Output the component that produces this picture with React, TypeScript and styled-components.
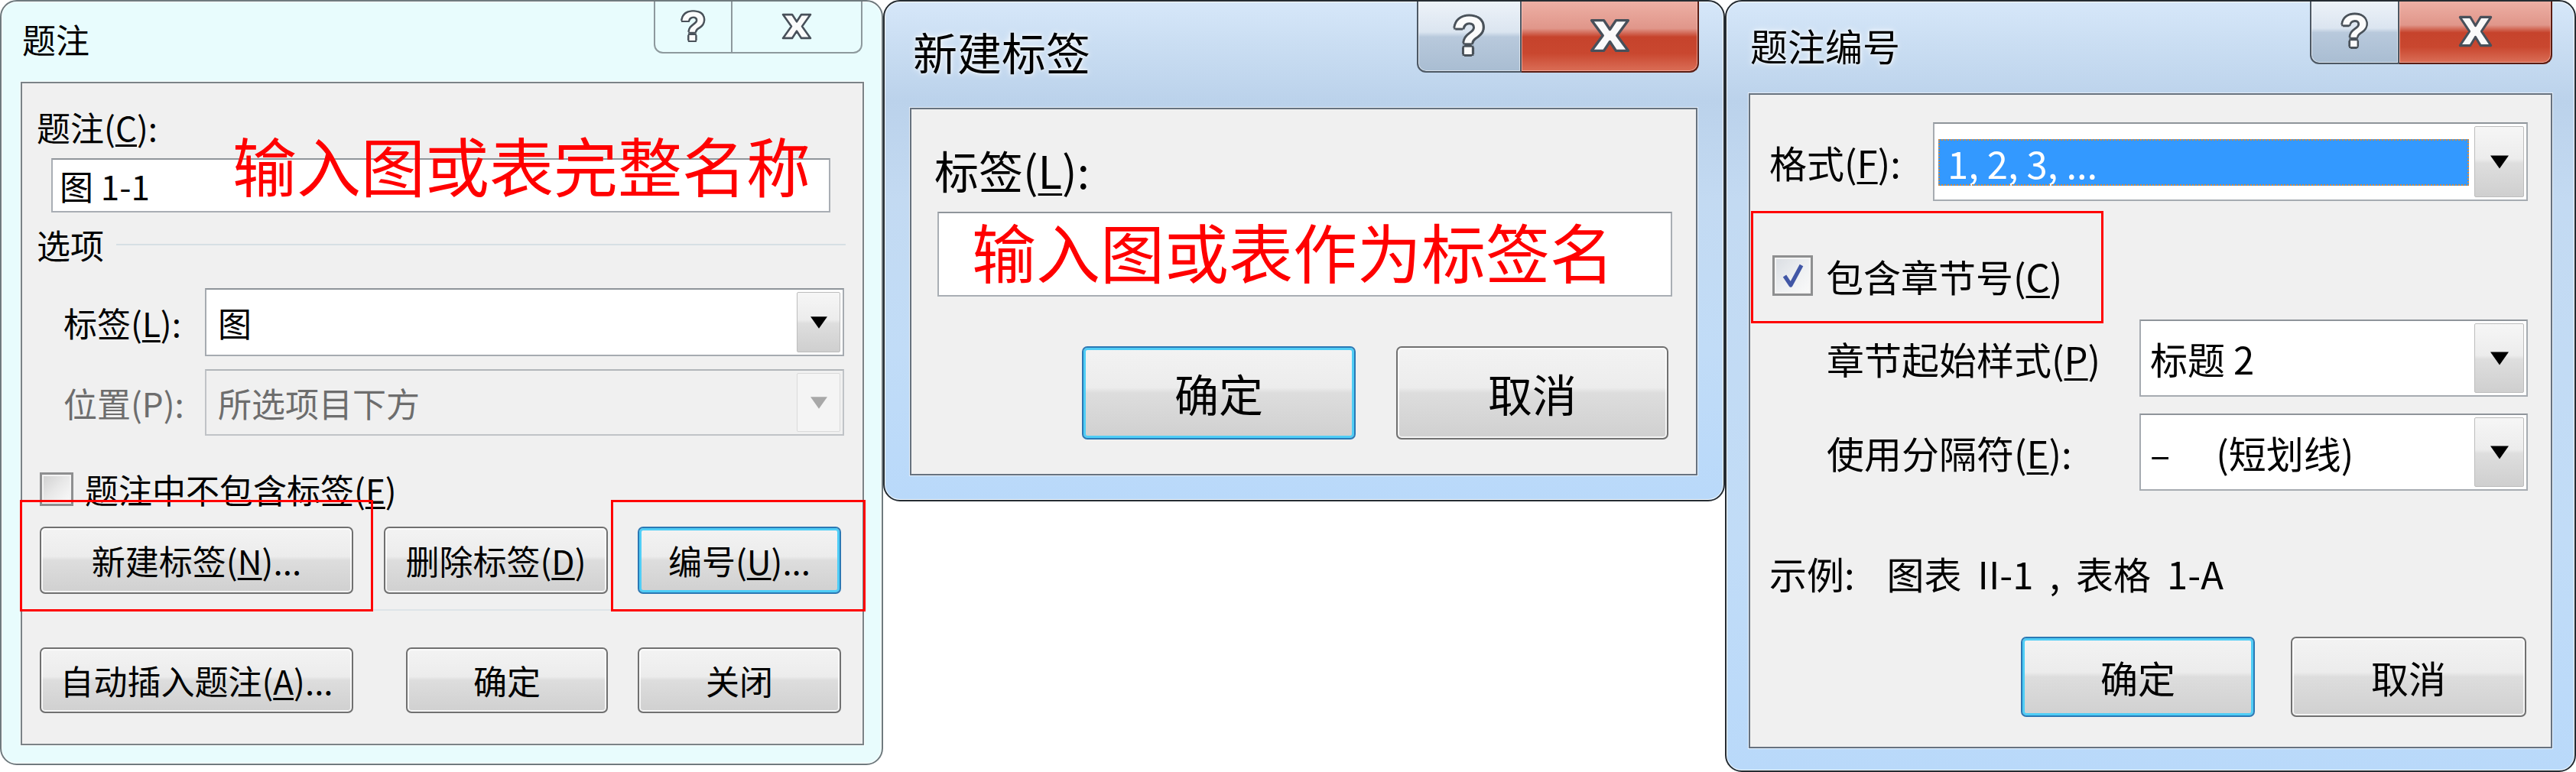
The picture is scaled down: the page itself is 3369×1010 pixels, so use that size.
import React from "react";
import styled, { createGlobalStyle, css } from "styled-components";

const UI_FONT = `"Noto Sans CJK SC", "Noto Sans", "Liberation Sans", sans-serif`;

const GlobalStyle = createGlobalStyle`
  html, body { margin: 0; padding: 0; background: #ffffff; }
  body { font-family: ${UI_FONT}; }
  #root { width: 3369px; height: 1010px; }
`;

type Skin = "basic" | "aero";

const Desktop = styled.div`
  display: flex;
  align-items: flex-start;
  width: 3369px;
  height: 1010px;
  overflow: hidden;
  background: #ffffff;
`;

const Window = styled.div<{ $w: number; $h: number; $skin: Skin; $fs: number }>`
  position: relative;
  flex: 0 0 auto;
  box-sizing: border-box;
  width: ${(p) => p.$w}px;
  height: ${(p) => p.$h}px;
  display: flex;
  flex-direction: column;
  border: 2px solid ${(p) => (p.$skin === "basic" ? "#6f7a7e" : "#252c32")};
  border-radius: 22px;
  overflow: hidden;
  font-family: ${UI_FONT};
  font-size: ${(p) => p.$fs}px;
  line-height: 1;
  color: #000;
  background: ${(p) =>
    p.$skin === "basic"
      ? "#e8fcfd"
      : "linear-gradient(180deg, #d6e7f9 0px, #c9ddf2 60px, #bbd2eb 130px, #c3daf2 260px, #c1dcf7 70%, #b9d9fa 100%)"};
  box-shadow: inset 0 0 0 1px rgba(255, 255, 255, 0.8);
`;

const TitleBar = styled.div<{ $h: number }>`
  flex: 0 0 ${(p) => p.$h}px;
  display: flex;
  justify-content: space-between;
  align-items: flex-start;
`;

const TitleText = styled.div<{ $pt: number; $pl: number; $glow?: boolean }>`
  padding: ${(p) => p.$pt}px 0 0 ${(p) => p.$pl}px;
  line-height: 1;
  white-space: nowrap;
  ${(p) =>
    p.$glow &&
    css`
      text-shadow: 0 0 10px rgba(255, 255, 255, 0.95), 0 0 4px rgba(255, 255, 255, 0.9);
    `}
`;

const CaptionGroup = styled.div<{ $mr: number }>`
  display: flex;
  margin-right: ${(p) => p.$mr}px;
  margin-top: -2px;
`;

const CaptionButton = styled.div<{ $w: number; $h: number; $kind: "help" | "close"; $skin: Skin }>`
  box-sizing: border-box;
  width: ${(p) => p.$w}px;
  height: ${(p) => p.$h}px;
  display: flex;
  align-items: center;
  justify-content: center;
  border: 2px solid;
  border-top: none;
  ${(p) =>
    p.$kind === "help"
      ? css`
          border-bottom-left-radius: 12px;
        `
      : css`
          border-left: none;
          border-bottom-right-radius: 12px;
        `}
  ${(p) =>
    p.$skin === "basic"
      ? css`
          border-color: #8d999d;
          background: #e8fcfd;
        `
      : p.$kind === "help"
      ? css`
          border-color: #4d5864;
          background: linear-gradient(180deg, #eef3f9 0%, #dbe5f0 45%, #b8c9dc 52%, #a9bdd2 100%);
          box-shadow: inset 0 0 0 1px rgba(255, 255, 255, 0.55);
        `
      : css`
          border-color: #5a1c12;
          background: linear-gradient(180deg, #eeb1a6 0%, #e0968a 40%, #c6432c 52%, #c9472f 75%, #da6e57 100%);
          box-shadow: inset 0 0 0 1px rgba(255, 210, 200, 0.55);
        `}
`;

const outline = (r: number, c: string) => {
  const d = +(r * 0.72).toFixed(2);
  return [
    `${r}px 0 0 ${c}`,
    `-${r}px 0 0 ${c}`,
    `0 ${r}px 0 ${c}`,
    `0 -${r}px 0 ${c}`,
    `${d}px ${d}px 0 ${c}`,
    `-${d}px ${d}px 0 ${c}`,
    `${d}px -${d}px 0 ${c}`,
    `-${d}px -${d}px 0 ${c}`,
  ].join(", ");
};

const HelpMark = styled.span<{ $fs: number }>`
  font-family: "Liberation Sans", Arial, sans-serif;
  font-weight: 700;
  font-size: ${(p) => p.$fs}px;
  line-height: 1;
  color: #fbfbfb;
  text-shadow: ${(p) => outline(Math.max(2, p.$fs * 0.045), "#4a525a")};
`;

const Body = styled.div<{ $l: number; $r: number; $b: number }>`
  flex: 1 1 auto;
  min-height: 0;
  display: flex;
  padding: 0 ${(p) => p.$r}px ${(p) => p.$b}px ${(p) => p.$l}px;
`;

const Panel = styled.div<{ $skin: Skin }>`
  flex: 1 1 auto;
  box-sizing: border-box;
  display: flex;
  flex-direction: column;
  background: #f0f0f0;
  border: 2px solid ${(p) => (p.$skin === "basic" ? "#7b8387" : "#67727f")};
  box-shadow: 0 0 0 1px rgba(255, 255, 255, 0.6);
`;

const Row = styled.div<{ $mt: number; $h: number; $pl?: number; $gap?: number }>`
  flex: 0 0 auto;
  display: flex;
  align-items: center;
  height: ${(p) => p.$h}px;
  margin-top: ${(p) => p.$mt}px;
  padding-left: ${(p) => p.$pl ?? 0}px;
  gap: ${(p) => p.$gap ?? 0}px;
`;

const Label = styled.div<{ $w?: number; $disabled?: boolean }>`
  flex: 0 0 ${(p) => (p.$w ? `${p.$w}px` : "auto")};
  white-space: nowrap;
  line-height: 1;
  color: ${(p) => (p.$disabled ? "#6d6d6d" : "#000")};
`;

const Mn = styled.span`
  text-decoration: underline;
  text-decoration-thickness: 0.06em;
  text-underline-offset: 0.1em;
`;

const GroupRule = styled.div<{ $ml: number; $mr: number }>`
  flex: 1 1 auto;
  height: 2px;
  margin: 0 ${(p) => p.$mr}px 0 ${(p) => p.$ml}px;
  background: #d6dfe4;
`;

const Rule = styled.div<{ $mt: number; $ml: number; $w: number }>`
  flex: 0 0 auto;
  height: 2px;
  width: ${(p) => p.$w}px;
  margin: ${(p) => p.$mt}px 0 0 ${(p) => p.$ml}px;
  background: #dde4e8;
`;

const TextBox = styled.div<{ $w: number; $h: number; $pl?: number }>`
  box-sizing: border-box;
  flex: 0 0 ${(p) => p.$w}px;
  height: ${(p) => p.$h}px;
  display: flex;
  align-items: center;
  padding-left: ${(p) => p.$pl ?? 8}px;
  background: #ffffff;
  border: 2px solid #a9aeb4;
  border-top-color: #8f959b;
  white-space: nowrap;
`;

const Combo = styled.div<{ $w: number; $h: number; $disabled?: boolean }>`
  box-sizing: border-box;
  flex: 0 0 ${(p) => p.$w}px;
  height: ${(p) => p.$h}px;
  display: flex;
  padding: 3px;
  background: ${(p) => (p.$disabled ? "#f0f0f0" : "#ffffff")};
  border: 2px solid ${(p) => (p.$disabled ? "#c0c3c7" : "#a6abb1")};
  border-top-color: ${(p) => (p.$disabled ? "#b2b6ba" : "#8e949a")};
`;

const ComboValue = styled.div<{ $pl: number; $disabled?: boolean }>`
  flex: 1 1 auto;
  min-width: 0;
  display: flex;
  align-items: center;
  padding-left: ${(p) => p.$pl}px;
  white-space: pre;
  color: ${(p) => (p.$disabled ? "#6d6d6d" : "#000")};
`;

const Selection = styled.div<{ $mt: number; $mb: number; $mr: number; $pl: number }>`
  flex: 1 1 auto;
  display: flex;
  align-items: center;
  margin: ${(p) => p.$mt}px ${(p) => p.$mr}px ${(p) => p.$mb}px 2px;
  padding-left: ${(p) => p.$pl}px;
  background: #3399ff;
  color: #ffffff;
  outline: 2px dotted #cf8a45;
  outline-offset: -2px;
  white-space: nowrap;
`;

const DropButton = styled.div<{ $w: number; $disabled?: boolean }>`
  box-sizing: border-box;
  flex: 0 0 ${(p) => p.$w}px;
  display: flex;
  align-items: center;
  justify-content: center;
  border: 1px solid ${(p) => (p.$disabled ? "#dadada" : "#bdbdbd")};
  border-radius: 2px;
  background: ${(p) =>
    p.$disabled
      ? "#f4f4f4"
      : "linear-gradient(180deg, #f6f6f6 0%, #ececec 46%, #dedede 52%, #cfcfcf 100%)"};
`;

const PushButton = styled.div<{ $w: number; $h: number; $focused?: boolean; $ml?: number }>`
  box-sizing: border-box;
  flex: 0 0 ${(p) => p.$w}px;
  height: ${(p) => p.$h}px;
  margin-left: ${(p) => p.$ml ?? 0}px;
  display: flex;
  align-items: center;
  justify-content: center;
  white-space: nowrap;
  line-height: 1;
  border-radius: 7px;
  border: 2px solid ${(p) => (p.$focused ? "#2b78b4" : "#707070")};
  background: linear-gradient(180deg, #f3f3f3 0%, #ececec 44%, #dddddd 50%, #d0d0d0 100%);
  box-shadow: ${(p) =>
    p.$focused ? "inset 0 0 0 3px #4fcdf6" : "inset 0 0 0 2px rgba(255, 255, 255, 0.75)"};
`;

const CheckBox = styled.div<{ $size: number; $checked?: boolean }>`
  box-sizing: border-box;
  flex: 0 0 ${(p) => p.$size}px;
  height: ${(p) => p.$size}px;
  display: flex;
  align-items: center;
  justify-content: center;
  border: 3px solid #8e8f90;
  background: ${(p) =>
    p.$checked
      ? "linear-gradient(135deg, #d9dde2 0%, #eef0f2 55%, #fafafa 100%)"
      : "linear-gradient(135deg, #cfcfcf 0%, #e9e9e9 50%, #fbfbfb 100%)"};
  box-shadow: inset 0 0 0 2px #f3f3f3;
`;

const SampleText = styled.div`
  white-space: pre;
  word-spacing: 10px;
  line-height: 1;
`;

const RedNote = styled.div<{ $l: number; $t: number }>`
  position: absolute;
  left: ${(p) => p.$l}px;
  top: ${(p) => p.$t}px;
  font-family: ${UI_FONT};
  font-size: 84px;
  font-weight: 400;
  line-height: 1;
  color: #ff0000;
  white-space: nowrap;
  pointer-events: none;
`;

const RedFrame = styled.div<{ $l: number; $t: number; $w: number; $h: number }>`
  position: absolute;
  left: ${(p) => p.$l}px;
  top: ${(p) => p.$t}px;
  width: ${(p) => p.$w}px;
  height: ${(p) => p.$h}px;
  box-sizing: border-box;
  border: 3px solid #ff0000;
  pointer-events: none;
`;

/* ---------- drawings ---------- */

const CloseGlyph: React.FC<{ w: number; h: number }> = ({ w, h }) => (
  <svg width={w} height={h} viewBox="0 0 40 34" preserveAspectRatio="none">
    <polygon
      points="2,2 14,2 20,11 26,2 38,2 27,17 38,32 26,32 20,23 14,32 2,32 13,17"
      fill="#fafafa"
      stroke="#48505a"
      strokeWidth={2.6}
      strokeLinejoin="round"
    />
  </svg>
);

const Arrow: React.FC<{ w: number; h: number; color?: string }> = ({ w, h, color = "#000" }) => (
  <svg width={w} height={h} viewBox="0 0 10 7">
    <polygon points="0,0 10,0 5,7" fill={color} />
  </svg>
);

const CheckMark: React.FC<{ size: number }> = ({ size }) => (
  <svg width={size} height={size} viewBox="0 0 20 20">
    <path d="M4.5 10.5 L8.5 16.5 L15.5 3.5" fill="none" stroke="#4157a6" strokeWidth={2.6} strokeLinejoin="round" />
  </svg>
);

/* ---------- dialogs ---------- */

const CaptionDialog: React.FC = () => (
  <Window $w={1155} $h={1001} $skin="basic" $fs={44}>
    <TitleBar $h={105}>
      <TitleText $pt={27} $pl={27}>题注</TitleText>
      <CaptionGroup $mr={25}>
        <CaptionButton $w={103} $h={70} $kind="help" $skin="basic">
          <HelpMark $fs={54}>?</HelpMark>
        </CaptionButton>
        <CaptionButton $w={170} $h={70} $kind="close" $skin="basic">
          <CloseGlyph w={40} h={35} />
        </CaptionButton>
      </CaptionGroup>
    </TitleBar>
    <Body $l={25} $r={23} $b={24}>
      <Panel $skin="basic">
        <Row $mt={33} $h={48} $pl={19}>
          <Label>
            题注(<Mn>C</Mn>):
          </Label>
        </Row>
        <Row $mt={17} $h={71} $pl={38}>
          <TextBox $w={1019} $h={71} $pl={9}>
            图 1-1
          </TextBox>
        </Row>
        <Row $mt={18} $h={48} $pl={19}>
          <Label>选项</Label>
          <GroupRule $ml={16} $mr={22} />
        </Row>
        <Row $mt={33} $h={89} $pl={54}>
          <Label $w={185}>
            标签(<Mn>L</Mn>):
          </Label>
          <Combo $w={836} $h={89}>
            <ComboValue $pl={12}>图</ComboValue>
            <DropButton $w={57}>
              <Arrow w={22} h={16} />
            </DropButton>
          </Combo>
        </Row>
        <Row $mt={17} $h={87} $pl={54}>
          <Label $w={185} $disabled>
            位置(P):
          </Label>
          <Combo $w={836} $h={87} $disabled>
            <ComboValue $pl={12} $disabled>
              所选项目下方
            </ComboValue>
            <DropButton $w={57} $disabled>
              <Arrow w={22} h={16} color="#a8a8a8" />
            </DropButton>
          </Combo>
        </Row>
        <Row $mt={48} $h={44} $pl={23} $gap={15}>
          <CheckBox $size={44} />
          <Label>
            题注中不包含标签(<Mn>E</Mn>)
          </Label>
        </Row>
        <Row $mt={27} $h={88} $pl={23}>
          <PushButton $w={410} $h={88}>
            新建标签(<Mn>N</Mn>)...
          </PushButton>
          <PushButton $w={293} $h={88} $ml={40}>
            删除标签(<Mn>D</Mn>)
          </PushButton>
          <PushButton $w={266} $h={88} $ml={39} $focused>
            编号(<Mn>U</Mn>)...
          </PushButton>
        </Row>
        <Rule $mt={20} $ml={23} $w={1054} />
        <Row $mt={48} $h={86} $pl={23}>
          <PushButton $w={410} $h={86}>
            自动插入题注(<Mn>A</Mn>)...
          </PushButton>
          <PushButton $w={264} $h={86} $ml={69}>
            确定
          </PushButton>
          <PushButton $w={266} $h={86} $ml={39}>
            关闭
          </PushButton>
        </Row>
      </Panel>
    </Body>
    <RedNote $l={302} $t={171}>输入图或表完整名称</RedNote>
    <RedFrame $l={24} $t={652} $w={462} $h={146} />
    <RedFrame $l={797} $t={652} $w={333} $h={146} />
  </Window>
);

const NewLabelDialog: React.FC = () => (
  <Window $w={1101} $h={656} $skin="aero" $fs={58}>
    <TitleBar $h={139}>
      <TitleText $pt={36} $pl={37} $glow>
        新建标签
      </TitleText>
      <CaptionGroup $mr={32}>
        <CaptionButton $w={137} $h={95} $kind="help" $skin="aero">
          <HelpMark $fs={70}>?</HelpMark>
        </CaptionButton>
        <CaptionButton $w={232} $h={95} $kind="close" $skin="aero">
          <CloseGlyph w={53} h={45} />
        </CaptionButton>
      </CaptionGroup>
    </TitleBar>
    <Body $l={33} $r={34} $b={32}>
      <Panel $skin="aero">
        <Row $mt={47} $h={64} $pl={30}>
          <Label>
            标签(<Mn>L</Mn>):
          </Label>
        </Row>
        <Row $mt={23} $h={111} $pl={34}>
          <TextBox $w={961} $h={111} />
        </Row>
        <Row $mt={65} $h={122} $pl={223}>
          <PushButton $w={358} $h={122} $focused>
            确定
          </PushButton>
          <PushButton $w={356} $h={122} $ml={53}>
            取消
          </PushButton>
        </Row>
      </Panel>
    </Body>
    <RedNote $l={114} $t={284}>输入图或表作为标签名</RedNote>
  </Window>
);

const NumberingDialog: React.FC = () => (
  <Window $w={1113} $h={1010} $skin="aero" $fs={49}>
    <TitleBar $h={120}>
      <TitleText $pt={32} $pl={31} $glow>
        题注编号
      </TitleText>
      <CaptionGroup $mr={29}>
        <CaptionButton $w={117} $h={84} $kind="help" $skin="aero">
          <HelpMark $fs={60}>?</HelpMark>
        </CaptionButton>
        <CaptionButton $w={200} $h={84} $kind="close" $skin="aero">
          <CloseGlyph w={45} h={42} />
        </CaptionButton>
      </CaptionGroup>
    </TitleBar>
    <Body $l={29} $r={29} $b={29}>
      <Panel $skin="aero">
        <Row $mt={36} $h={103} $pl={25}>
          <Label $w={214}>
            格式(<Mn>F</Mn>):
          </Label>
          <Combo $w={778} $h={103}>
            <Selection $mt={17} $mb={15} $mr={7} $pl={12}>
              1, 2, 3, ...
            </Selection>
            <DropButton $w={65}>
              <Arrow w={24} h={18} />
            </DropButton>
          </Combo>
        </Row>
        <Row $mt={70} $h={54} $pl={29} $gap={17}>
          <CheckBox $size={53} $checked>
            <CheckMark size={40} />
          </CheckBox>
          <Label>
            包含章节号(<Mn>C</Mn>)
          </Label>
        </Row>
        <Row $mt={31} $h={101} $pl={100}>
          <Label $w={409}>
            章节起始样式(<Mn>P</Mn>)
          </Label>
          <Combo $w={508} $h={101}>
            <ComboValue $pl={9}>标题 2</ComboValue>
            <DropButton $w={65}>
              <Arrow w={24} h={18} />
            </DropButton>
          </Combo>
        </Row>
        <Row $mt={22} $h={101} $pl={100}>
          <Label $w={409}>
            使用分隔符(<Mn>E</Mn>):
          </Label>
          <Combo $w={508} $h={101}>
            <ComboValue $pl={9}>{"–\u2003 (短划线)"}</ComboValue>
            <DropButton $w={65}>
              <Arrow w={24} h={18} />
            </DropButton>
          </Combo>
        </Row>
        <Row $mt={79} $h={56} $pl={25}>
          <SampleText>{"示例:  图表 II-1 , 表格 1-A"}</SampleText>
        </Row>
        <Row $mt={56} $h={105} $pl={354}>
          <PushButton $w={306} $h={105} $focused>
            确定
          </PushButton>
          <PushButton $w={308} $h={105} $ml={47}>
            取消
          </PushButton>
        </Row>
      </Panel>
    </Body>
    <RedFrame $l={32} $t={274} $w={461} $h={147} />
  </Window>
);

export default function App() {
  return (
    <>
      <GlobalStyle />
      <Desktop>
        <CaptionDialog />
        <NewLabelDialog />
        <NumberingDialog />
      </Desktop>
    </>
  );
}
